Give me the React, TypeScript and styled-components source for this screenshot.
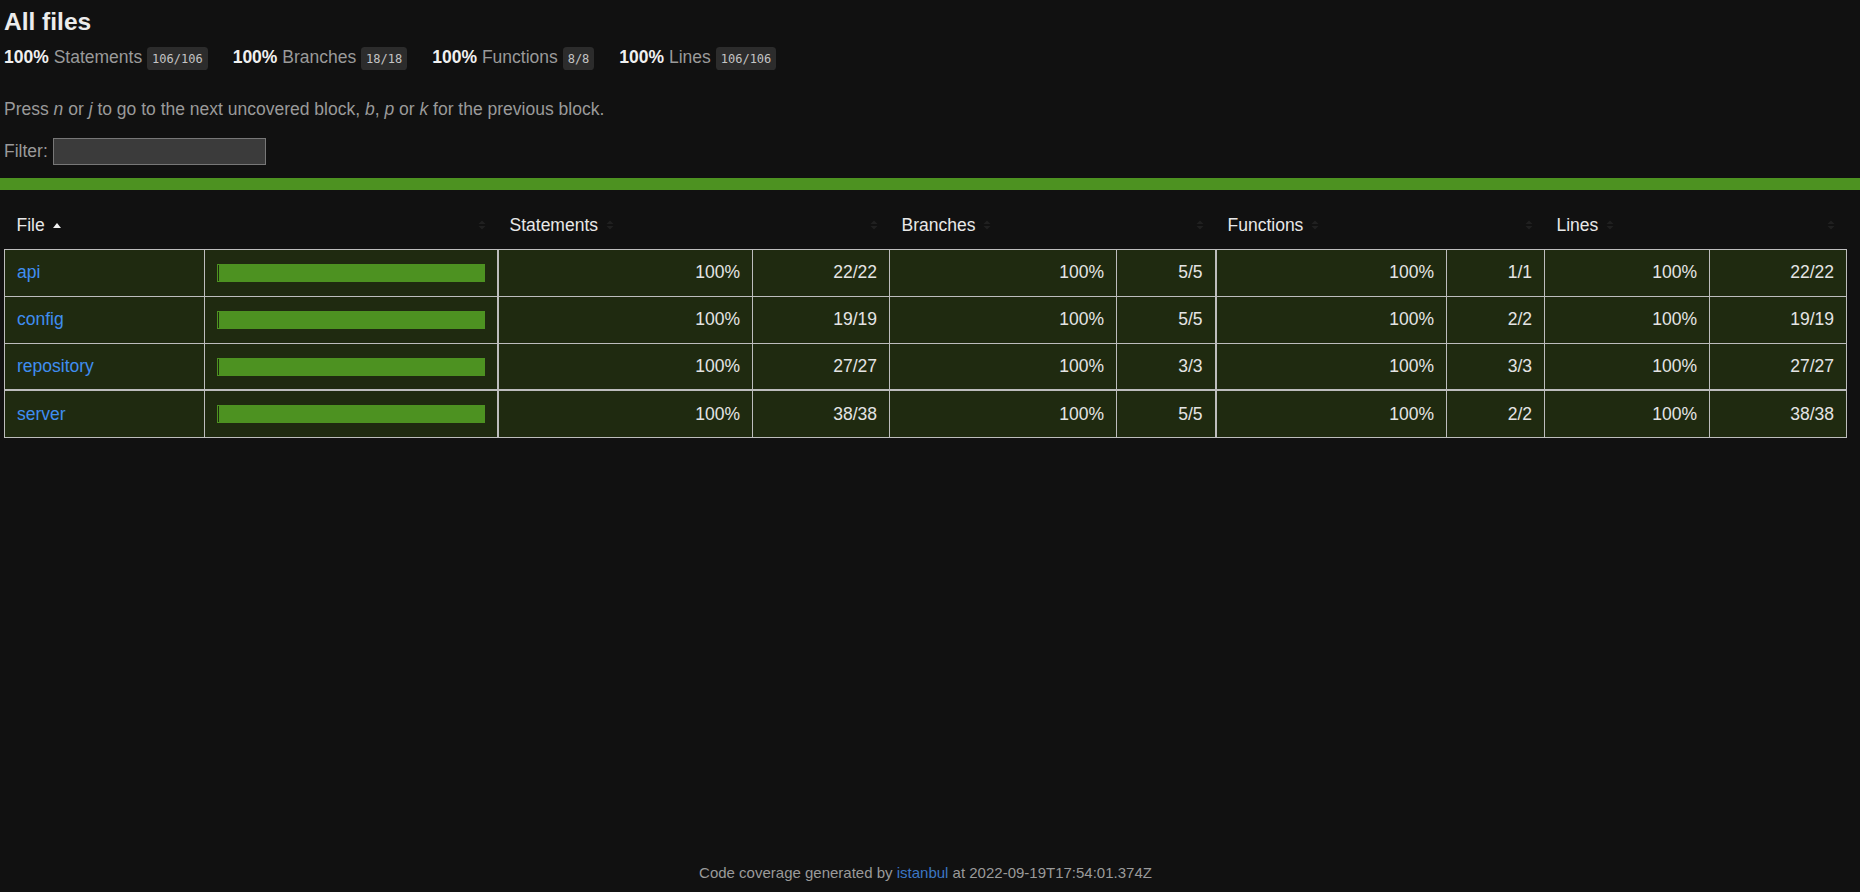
import React from 'react'
import styled, { createGlobalStyle } from 'styled-components'

const GlobalStyle = createGlobalStyle`
  html, body, #root {
    height: 100%;
  }
  body {
    margin: 0;
    background: #111111;
    color: #e6e6e6;
    font-family: 'Liberation Sans', Arial, Helvetica, sans-serif;
    font-size: 17.5px;
  }
  *, *::before, *::after {
    box-sizing: border-box;
  }
`

const Page = styled.div`
  min-height: 100vh;
  display: flex;
  flex-direction: column;
`

const Header = styled.div`
  padding: 8px 13px 13px 4px;
`

const Title = styled.h1`
  margin: 0;
  font-size: 24.5px;
  line-height: 28px;
  font-weight: 700;
  color: #ececec;
`

const StatsRow = styled.div`
  display: flex;
  padding: 11px 0 14px;
  line-height: 20px;
`

const Stat = styled.div`
  padding-right: 25px;
  white-space: nowrap;
`

const Strong = styled.span`
  font-weight: 700;
  color: #f0f0f0;
`

const Quiet = styled.span`
  color: #9a9a9a;
`

const Fraction = styled.span`
  font-family: 'DejaVu Sans Mono', 'Liberation Mono', monospace;
  font-size: 12px;
  color: #c4c4c4;
  background: #2c2c2c;
  padding: 4.8px 5px;
  border-radius: 3.6px;
  vertical-align: middle;
`

const Hint = styled.p`
  margin: 17px 0 19px;
  line-height: 20px;
  color: #9a9a9a;
`

const FilterRow = styled.div`
  display: flex;
  align-items: center;
  gap: 5px;
  height: 27px;
  color: #9a9a9a;
`

const FilterInput = styled.input`
  width: 213px;
  height: 27px;
  margin: 0;
  padding: 0 4px;
  background: #3b3b3b;
  border: 1px solid #777777;
  color: #dddddd;
  font: inherit;
  outline: none;
`

const StatusLine = styled.div`
  height: 12px;
  background: rgb(77, 146, 33);
`

const TableWrap = styled.div`
  padding: 12px 13px 0 4px;
`

const Table = styled.table`
  width: 100%;
  border-collapse: collapse;
  table-layout: fixed;
`

const Th = styled.th<{ $align?: 'left' | 'right' }>`
  height: 47px;
  padding: 0 12px;
  line-height: 23px;
  font-weight: 400;
  white-space: nowrap;
  text-align: ${({ $align }) => $align ?? 'left'};
  color: #e8e8e8;
`

const Body = styled.tbody`
  border: 1px solid #bdbdbd;

  tr {
    border-bottom: 1px solid #bdbdbd;
  }
  tr:nth-child(3) {
    border-bottom-width: 2px;
  }
  td:nth-child(2),
  td:nth-child(6) {
    border-right-width: 2px;
  }
`

const Td = styled.td<{ $align?: 'left' | 'right' }>`
  height: 47px;
  padding: 0 12px;
  line-height: 23px;
  background: #1f2a10;
  border-right: 1px solid #bdbdbd;
  text-align: ${({ $align }) => $align ?? 'left'};
  color: #e4e4e4;
  white-space: nowrap;

  &:last-child {
    border-right: none;
  }
`

const FileLink = styled.a`
  color: #3f8ef0;
  text-decoration: none;
`

const Chart = styled.div`
  line-height: 0;
  border: 1px solid rgb(77, 146, 33);
  padding-left: 1px;
  background: #1f2a10;
`

const CoverFill = styled.div`
  height: 16px;
  background: rgb(77, 146, 33);
`

const SorterIcon = styled.svg`
  margin-left: 8px;
  vertical-align: baseline;
`

const Footer = styled.div`
  margin-top: auto;
  padding: 0 13px 11px 4px;
  text-align: center;
  font-size: 15px;
  line-height: 17px;
  color: #9a9a9a;
`

const FooterLink = styled.a`
  color: #3b77c4;
  text-decoration: none;
`

const Sorter: React.FC<{ sorted?: boolean }> = ({ sorted }) => (
  <SorterIcon width="8" height="12" viewBox="0 0 8 12">
    {sorted ? (
      <polygon points="0,9 4,4 8,9" fill="#f2f2f2" />
    ) : (
      <>
        <polygon points="0.5,5 4,1.5 7.5,5" fill="#202020" />
        <polygon points="0.5,7 4,10.5 7.5,7" fill="#202020" />
      </>
    )}
  </SorterIcon>
)

type Pair = [number, number]

interface Row {
  name: string
  statements: Pair
  branches: Pair
  functions: Pair
  lines: Pair
}

const rows: Row[] = [
  { name: 'api', statements: [22, 22], branches: [5, 5], functions: [1, 1], lines: [22, 22] },
  { name: 'config', statements: [19, 19], branches: [5, 5], functions: [2, 2], lines: [19, 19] },
  { name: 'repository', statements: [27, 27], branches: [3, 3], functions: [3, 3], lines: [27, 27] },
  { name: 'server', statements: [38, 38], branches: [5, 5], functions: [2, 2], lines: [38, 38] },
]

const summary = [
  { label: 'Statements', covered: 106, total: 106 },
  { label: 'Branches', covered: 18, total: 18 },
  { label: 'Functions', covered: 8, total: 8 },
  { label: 'Lines', covered: 106, total: 106 },
]

const colWidths = [200, 293, 255, 137, 227, 99, 231, 98, 165, 137]

const pct = ([covered, total]: Pair) => (total === 0 ? 100 : Math.floor((covered / total) * 10000) / 100)

const App: React.FC = () => {
  return (
    <Page>
      <GlobalStyle />
      <Header>
        <Title>All files</Title>
        <StatsRow>
          {summary.map((s) => (
            <Stat key={s.label}>
              <Strong>{Math.round((s.covered / s.total) * 100)}%</Strong> <Quiet>{s.label}</Quiet>{' '}
              <Fraction>
                {s.covered}/{s.total}
              </Fraction>
            </Stat>
          ))}
        </StatsRow>
        <Hint>
          Press <em>n</em> or <em>j</em> to go to the next uncovered block, <em>b</em>, <em>p</em> or <em>k</em> for
          the previous block.
        </Hint>
        <FilterRow>
          Filter:
          <FilterInput type="search" />
        </FilterRow>
      </Header>

      <StatusLine />

      <TableWrap>
        <Table>
          <colgroup>
            {colWidths.map((w, i) => (
              <col key={i} style={{ width: w }} />
            ))}
          </colgroup>
          <thead>
            <tr>
              <Th>
                File
                <Sorter sorted />
              </Th>
              <Th $align="right">
                <Sorter />
              </Th>
              {['Statements', 'Branches', 'Functions', 'Lines'].map((label) => (
                <React.Fragment key={label}>
                  <Th>
                    {label}
                    <Sorter />
                  </Th>
                  <Th $align="right">
                    <Sorter />
                  </Th>
                </React.Fragment>
              ))}
            </tr>
          </thead>
          <Body>
            {rows.map((row) => {
              const metrics = [row.statements, row.branches, row.functions, row.lines]
              const stmtPct = pct(row.statements)
              return (
                <tr key={row.name}>
                  <Td>
                    <FileLink href="#">{row.name}</FileLink>
                  </Td>
                  <Td>
                    <Chart>
                      <CoverFill style={{ width: `${stmtPct}%` }} />
                    </Chart>
                  </Td>
                  {metrics.map((m, i) => (
                    <React.Fragment key={i}>
                      <Td $align="right">{pct(m)}%</Td>
                      <Td $align="right">
                        {m[0]}/{m[1]}
                      </Td>
                    </React.Fragment>
                  ))}
                </tr>
              )
            })}
          </Body>
        </Table>
      </TableWrap>

      <Footer>
        Code coverage generated by <FooterLink href="#">istanbul</FooterLink> at 2022-09-19T17:54:01.374Z
      </Footer>
    </Page>
  )
}

export default App
